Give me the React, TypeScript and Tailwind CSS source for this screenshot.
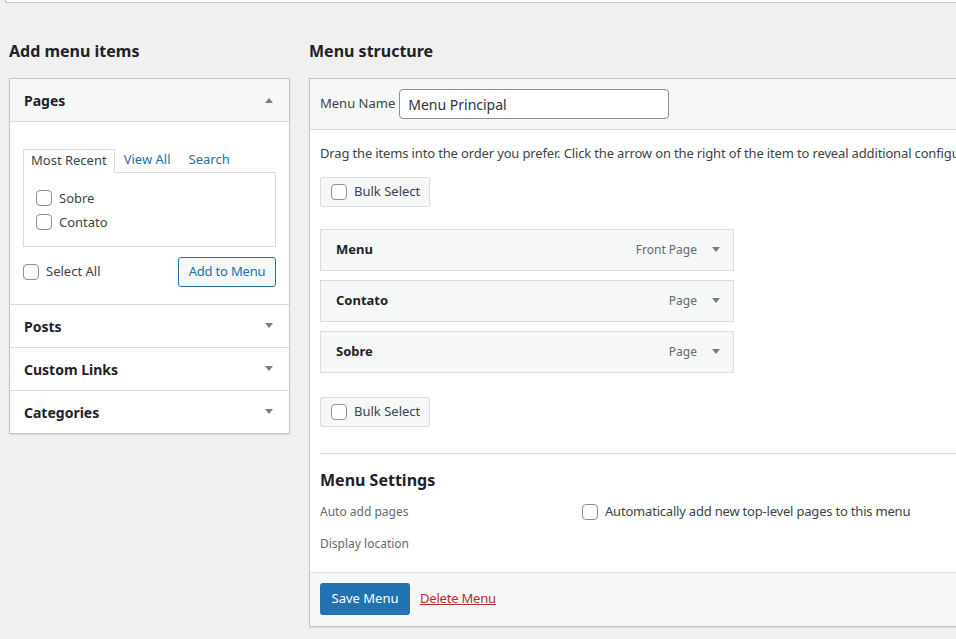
import React from "react";

const Checkbox = () => (
  <span className="inline-block w-4 h-4 shrink-0 rounded-[4px] border border-[#8c8f94] bg-white" />
);

const Caret = ({ up = false }: { up?: boolean }) => (
  <svg width="10" height="6" viewBox="0 0 10 6" className="shrink-0">
    {up ? (
      <polygon points="1,6 9,6 5,1" fill="#787c82" />
    ) : (
      <polygon points="1,0 9,0 5,5" fill="#787c82" />
    )}
  </svg>
);

const AccordionHeader = ({ title, open = false }: { title: string; open?: boolean }) => (
  <div
    className={`flex items-center justify-between pl-[14px] pr-[15px] ${
      open ? "h-[43px] bg-[#f6f7f7] border-b border-[#dcdcde]" : "h-[43px] bg-white border-t border-[#dcdcde]"
    }`}
  >
    <span className="text-[14px] font-bold text-[#1d2327]">{title}</span>
    <Caret up={open} />
  </div>
);

const MenuItem = ({ title, type }: { title: string; type: string }) => (
  <div className="flex items-center justify-between w-[414px] h-[42px] pl-[15px] pr-[12px] bg-[#f6f7f7] border border-[#dcdcde]">
    <span className="text-[13px] font-bold text-[#1d2327]">{title}</span>
    <div className="flex items-center gap-[14px]">
      <span className="text-[12px] text-[#646970]">{type}</span>
      <Caret />
    </div>
  </div>
);

const BulkSelect = () => (
  <div className="flex items-center gap-[7px] w-[110px] h-[30px] pl-[10px] bg-[#f6f7f7] border border-[#dcdcde] rounded-[2px]">
    <Checkbox />
    <span className="text-[13px] text-[#3c434a]">Bulk Select</span>
  </div>
);

export default function App() {
  return (
    <div
      className="w-[956px] h-[639px] overflow-hidden bg-[#f0f0f1] text-[#3c434a]"
      style={{ fontFamily: '"Noto Sans", "Open Sans", sans-serif' }}
    >
      {/* cut-off box at the top */}
      <div className="ml-[5px] h-[3px] bg-white border-l border-b border-[#c3c4c7]" />

      <div className="flex gap-[19px] pl-[9px] pt-[38px]">
        {/* Add menu items column */}
        <div className="w-[281px] shrink-0">
          <h2 className="text-[16px] font-bold text-[#1d2327] leading-[20px] mb-[17px]">Add menu items</h2>
          <div className="bg-white border border-[#c3c4c7] shadow-[0_1px_1px_rgba(0,0,0,0.08)]">
            <AccordionHeader title="Pages" open />
            <div className="px-[13px] pt-[26px] pb-[17px]">
              <div className="flex items-end text-[13px]">
                <span className="h-[24px] px-[7px] flex items-center border border-[#dcdcde] border-b-white bg-white relative top-[1px] text-[#3c434a]">
                  Most Recent
                </span>
                <span className="ml-[9px] text-[#2271b1] h-[24px] flex items-center">View All</span>
                <span className="ml-[18px] text-[#2271b1] h-[24px] flex items-center">Search</span>
              </div>
              <div className="border border-[#dcdcde] h-[75px] px-[12px] pt-[17px] flex flex-col gap-[8px]">
                <label className="flex items-center gap-[7px] text-[13px] leading-[16px]">
                  <Checkbox />
                  Sobre
                </label>
                <label className="flex items-center gap-[7px] text-[13px] leading-[16px]">
                  <Checkbox />
                  Contato
                </label>
              </div>
              <div className="flex items-center justify-between mt-[10px]">
                <label className="flex items-center gap-[7px] text-[13px]">
                  <Checkbox />
                  Select All
                </label>
                <span className="h-[30px] w-[98px] justify-center flex items-center border border-[#2271b1] rounded-[3px] bg-[#f6f7f7] text-[13px] text-[#2271b1] tracking-[-0.2px]">
                  Add to Menu
                </span>
              </div>
            </div>
            <AccordionHeader title="Posts" />
            <AccordionHeader title="Custom Links" />
            <AccordionHeader title="Categories" />
          </div>
        </div>

        {/* Menu structure column */}
        <div className="w-[700px] shrink-0">
          <h2 className="text-[16px] font-bold text-[#1d2327] leading-[20px] mb-[17px]">Menu structure</h2>
          <div className="bg-white border border-[#c3c4c7] shadow-[0_1px_1px_rgba(0,0,0,0.08)]">
            <div className="flex items-center h-[51px] px-[10px] bg-[#f6f7f7] border-b border-[#dcdcde]">
              <span className="text-[13px] text-[#3c434a] mr-[4px]">Menu Name</span>
              <div className="w-[270px] h-[30px] flex items-center px-[8px] bg-white border border-[#8c8f94] rounded-[4px] text-[14px] text-[#2c3338]">
                Menu Principal
              </div>
            </div>
            <div className="px-[10px]">
              <p className="pt-[13px] text-[13px] whitespace-nowrap text-[#3c434a] leading-[20px] tracking-[-0.15px]">
                Drag the items into the order you prefer. Click the arrow on the right of the item to reveal additional configu
              </p>
              <div className="mt-[14px]">
                <BulkSelect />
              </div>
              <div className="mt-[22px] flex flex-col gap-[9px]">
                <MenuItem title="Menu" type="Front Page" />
                <MenuItem title="Contato" type="Page" />
                <MenuItem title="Sobre" type="Page" />
              </div>
              <div className="mt-[24px]">
                <BulkSelect />
              </div>
              <div className="mt-[26px] border-t border-[#dcdcde]" />
              <h3 className="mt-[16px] text-[16px] font-bold text-[#1d2327] leading-[20px]">Menu Settings</h3>
              <div className="flex items-center mt-[11px] h-[22px]">
                <span className="w-[262px] text-[12px] text-[#646970]">Auto add pages</span>
                <label className="flex items-center gap-[7px] text-[13px] text-[#3c434a] tracking-[-0.2px]">
                  <Checkbox />
                  Automatically add new top-level pages to this menu
                </label>
              </div>
              <div className="mt-[10px] h-[22px] flex items-center">
                <span className="text-[12px] text-[#646970]">Display location</span>
              </div>
              <div className="h-[17px]" />
            </div>
            <div className="flex items-start pt-[10px] h-[54px] px-[10px] bg-[#f6f7f7] border-t border-[#dcdcde]">
              <span className="h-[32px] w-[90px] justify-center flex items-center bg-[#2271b1] rounded-[3px] text-[13px] text-white">
                Save Menu
              </span>
              <span className="ml-[10px] h-[32px] flex items-center text-[13px] text-[#b32d2e] underline tracking-[-0.2px]">
                Delete Menu
              </span>
            </div>
          </div>
        </div>
      </div>
    </div>
  );
}
